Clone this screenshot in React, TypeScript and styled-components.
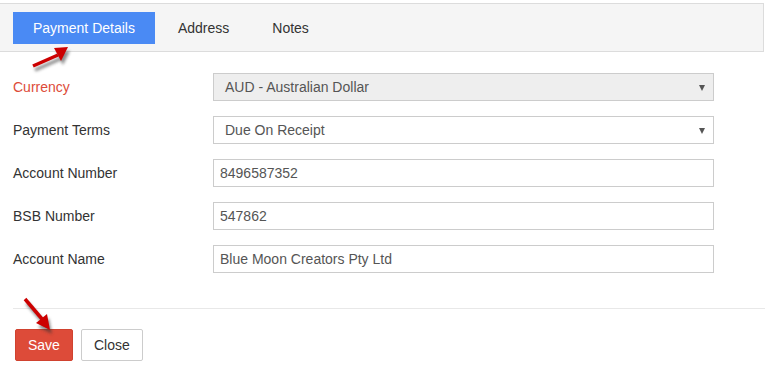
import React from "react";
import styled, { createGlobalStyle } from "styled-components";

const Global = createGlobalStyle`
  html, body { margin: 0; padding: 0; background: #fff; }
  body { font-family: "Liberation Sans", Arial, sans-serif; font-size: 14px; color: #333; }
`;

const Page = styled.div`
  position: relative;
  width: 765px;
  height: 375px;
  overflow: hidden;
  padding-top: 3px;
  box-sizing: border-box;
`;

const TabBar = styled.div`
  display: flex;
  gap: 3px;
  background: #f5f5f5;
  border: 1px solid #dcdcdc;
  border-left: none;
  padding: 8px 13px 7px;
  width: 764px;
  box-sizing: border-box;
`;

const Tab = styled.div<{ $active?: boolean }>`
  height: 32px;
  line-height: 32px;
  padding: 0 20px;
  font-size: 14px;
  color: ${(p) => (p.$active ? "#fff" : "#333")};
  background: ${(p) => (p.$active ? "#4a8af4" : "transparent")};
`;

const Form = styled.div`
  display: flex;
  flex-direction: column;
  gap: 15px;
  margin: 21px 0 0 13px;
`;

const Row = styled.div`
  display: grid;
  grid-template-columns: 200px 501px;
  align-items: center;
  height: 28px;
`;

const Label = styled.div<{ $required?: boolean }>`
  font-size: 14px;
  color: ${(p) => (p.$required ? "#dd4b39" : "#333")};
`;

const Field = styled.div<{ $disabled?: boolean; $select?: boolean }>`
  position: relative;
  height: 28px;
  box-sizing: border-box;
  border: 1px solid #ccc;
  background: ${(p) => (p.$disabled ? "#eee" : "#fff")};
  padding-left: ${(p) => (p.$select ? "11px" : "6px")};
  line-height: 26px;
  font-size: 14px;
  color: #555;
`;

const Caret = styled.span`
  position: absolute;
  right: 8px;
  top: 11px;
  width: 0;
  height: 0;
  border-left: 3px solid transparent;
  border-right: 3px solid transparent;
  border-top: 6px solid #555;
`;

const Divider = styled.div`
  height: 1px;
  background: #e8e8e8;
  margin: 35px 0 0 13px;
`;

const Actions = styled.div`
  display: flex;
  gap: 8px;
  margin: 20px 0 0 15px;
`;

const Button = styled.div<{ $primary?: boolean }>`
  height: 32px;
  box-sizing: border-box;
  line-height: 30px;
  padding: 0 12px;
  font-size: 14px;
  border-radius: 2px;
  border: 1px solid ${(p) => (p.$primary ? "#d0422f" : "#ccc")};
  background: ${(p) => (p.$primary ? "#dd4b39" : "#fff")};
  color: ${(p) => (p.$primary ? "#fff" : "#333")};
`;

const Annotation = styled.svg`
  position: absolute;
  overflow: visible;
  pointer-events: none;
`;

function Arrow({ left, top, w, h, shaft, head }: { left: number; top: number; w: number; h: number; shaft: string; head: string }) {
  return (
    <Annotation style={{ left, top }} width={w} height={h} viewBox={`0 0 ${w} ${h}`}>
      <defs>
        <filter id={`sh${left}`} x="-50%" y="-50%" width="200%" height="200%">
          <feGaussianBlur stdDeviation="1.6" />
        </filter>
      </defs>
      <g transform="translate(2,4)" filter={`url(#sh${left})`} opacity="0.55">
        <path d={shaft} stroke="#333" strokeWidth="3.5" fill="none" />
        <path d={head} fill="#333" />
      </g>
      <path d={shaft} stroke="#c00" strokeWidth="3.5" fill="none" strokeLinecap="butt" />
      <path d={head} fill="#c00" />
    </Annotation>
  );
}

export default function App() {
  return (
    <>
      <Global />
      <Page>
        <TabBar>
          <Tab $active>Payment Details</Tab>
          <Tab>Address</Tab>
          <Tab>Notes</Tab>
        </TabBar>
        <Form>
          <Row>
            <Label $required>Currency</Label>
            <Field $disabled $select>
              AUD - Australian Dollar
              <Caret />
            </Field>
          </Row>
          <Row>
            <Label>Payment Terms</Label>
            <Field $select>
              Due On Receipt
              <Caret />
            </Field>
          </Row>
          <Row>
            <Label>Account Number</Label>
            <Field>8496587352</Field>
          </Row>
          <Row>
            <Label>BSB Number</Label>
            <Field>547862</Field>
          </Row>
          <Row>
            <Label>Account Name</Label>
            <Field>Blue Moon Creators Pty Ltd</Field>
          </Row>
        </Form>
        <Divider />
        <Actions>
          <Button $primary>Save</Button>
          <Button>Close</Button>
        </Actions>
        <Arrow left={30} top={44} w={42} h={26} shaft="M3 22 L28 11" head="M38 3 L24 4 L31 17 Z" />
        <Arrow left={22} top={296} w={34} h={38} shaft="M3 3 L20 23" head="M28 34 L14 27 L25 18 Z" />
      </Page>
    </>
  );
}
